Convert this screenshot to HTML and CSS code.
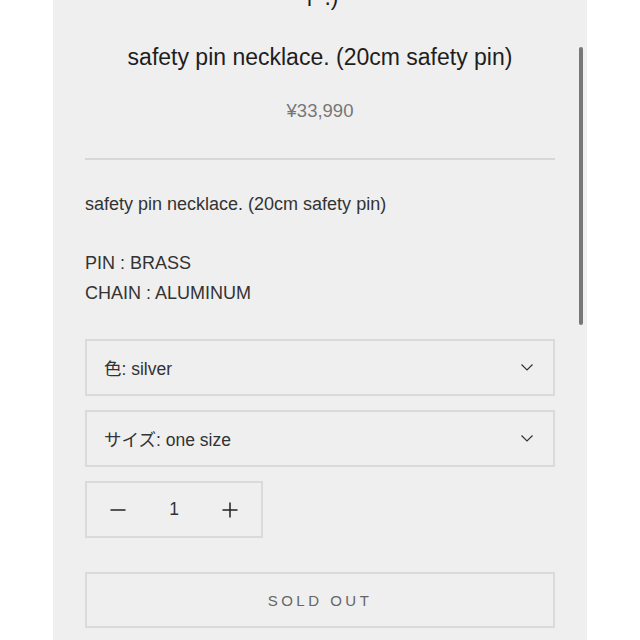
FILE: index.html
```html
<!DOCTYPE html>
<html lang="ja">
<head>
    <meta charset="UTF-8">
    <meta name="viewport" content="width=device-width, initial-scale=1.0">
    <title>safety pin necklace. (20cm safety pin)</title>
    <link rel="stylesheet" href="styles.css">
</head>
<body>
    <div class="panel">
        <div class="scrollbar"></div>

        <!-- previous item title, scrolled off -->
        <p class="prev-title">ド.)</p>

        <h1 class="product-title">safety pin necklace. (20cm safety pin)</h1>
        <p class="price">¥33,990</p>

        <hr class="divider">

        <div class="description">
            <p>safety pin necklace. (20cm safety pin)</p>
            <p>PIN : BRASS<br>CHAIN : ALUMINUM</p>
        </div>

        <!-- Variant selects -->
        <div class="select-box">
            <span>色: silver</span>
            <svg class="chevron" width="12" height="7" viewBox="0 0 12 7"><path d="M0.5 0.5l5.5 5.5 5.5-5.5" fill="none" stroke="#333" stroke-width="1.2"/></svg>
        </div>
        <div class="select-box">
            <span>サイズ: one size</span>
            <svg class="chevron" width="12" height="7" viewBox="0 0 12 7"><path d="M0.5 0.5l5.5 5.5 5.5-5.5" fill="none" stroke="#333" stroke-width="1.2"/></svg>
        </div>

        <!-- Quantity -->
        <div class="quantity">
            <button class="qty-btn" type="button">
                <svg width="16" height="16" viewBox="0 0 16 16"><path d="M0.5 8h15" stroke="#222" stroke-width="1.5"/></svg>
            </button>
            <span class="qty-value">1</span>
            <button class="qty-btn" type="button">
                <svg width="16" height="16" viewBox="0 0 16 16"><path d="M0.5 8h15M8 0.5v15" stroke="#222" stroke-width="1.5"/></svg>
            </button>
        </div>

        <button class="sold-out" type="button">SOLD OUT</button>
    </div>
</body>
</html>
```

FILE: styles.css
```css
body {
    margin: 0;
    background-color: #fff;
    font-family: 'Liberation Sans', 'Noto Sans CJK JP', sans-serif;
    color: #222;
    overflow: hidden;
}
.panel {
    position: relative;
    width: 470px;
    height: 640px;
    margin: 0 auto 0 53px;
    padding: 0 32px;
    background-color: #efefef;
    overflow: hidden;
}
.scrollbar {
    position: absolute;
    right: 4px;
    top: 47px;
    width: 4px;
    height: 278px;
    border-radius: 2px;
    background-color: #777;
}
.prev-title {
    margin: -18px 0 0;
    font-size: 23px;
    line-height: 30px;
    text-align: center;
    color: #1e1e1e;
}
.product-title {
    margin: 30px 0 0;
    font-size: 23px;
    font-weight: normal;
    line-height: 30px;
    text-align: center;
    color: #1e1e1e;
}
.price {
    margin: 27px 0 0;
    font-size: 18.5px;
    line-height: 24px;
    text-align: center;
    color: #777;
}
.divider {
    margin: 35px 0 0;
    border: none;
    border-top: 2px solid #d7d7d7;
}
.description {
    margin-top: 29px;
    font-size: 18px;
    line-height: 30px;
    color: #333;
}
.description p {
    margin: 0 0 29px;
}
.description p:last-child {
    margin-bottom: 31px;
}
.select-box {
    display: flex;
    align-items: center;
    justify-content: space-between;
    height: 53px;
    margin-bottom: 14px;
    padding: 0 20px 0 17px;
    border: 2px solid #dadada;
    font-size: 17.5px;
    color: #333;
}
.quantity {
    display: flex;
    align-items: center;
    justify-content: space-between;
    width: 174px;
    height: 53px;
    margin-top: 2px;
    border: 2px solid #dadada;
}
.qty-btn {
    display: flex;
    align-items: center;
    justify-content: center;
    width: 62px;
    height: 53px;
    padding: 0;
    border: none;
    background: none;
}
.qty-value {
    font-size: 17.5px;
    color: #333;
}
.sold-out {
    display: block;
    width: 470px;
    height: 56px;
    margin-top: 34px;
    border: 2px solid #dadada;
    background: none;
    font-family: 'Liberation Sans', sans-serif;
    font-size: 15px;
    letter-spacing: 3.5px;
    color: #666;
}
```
